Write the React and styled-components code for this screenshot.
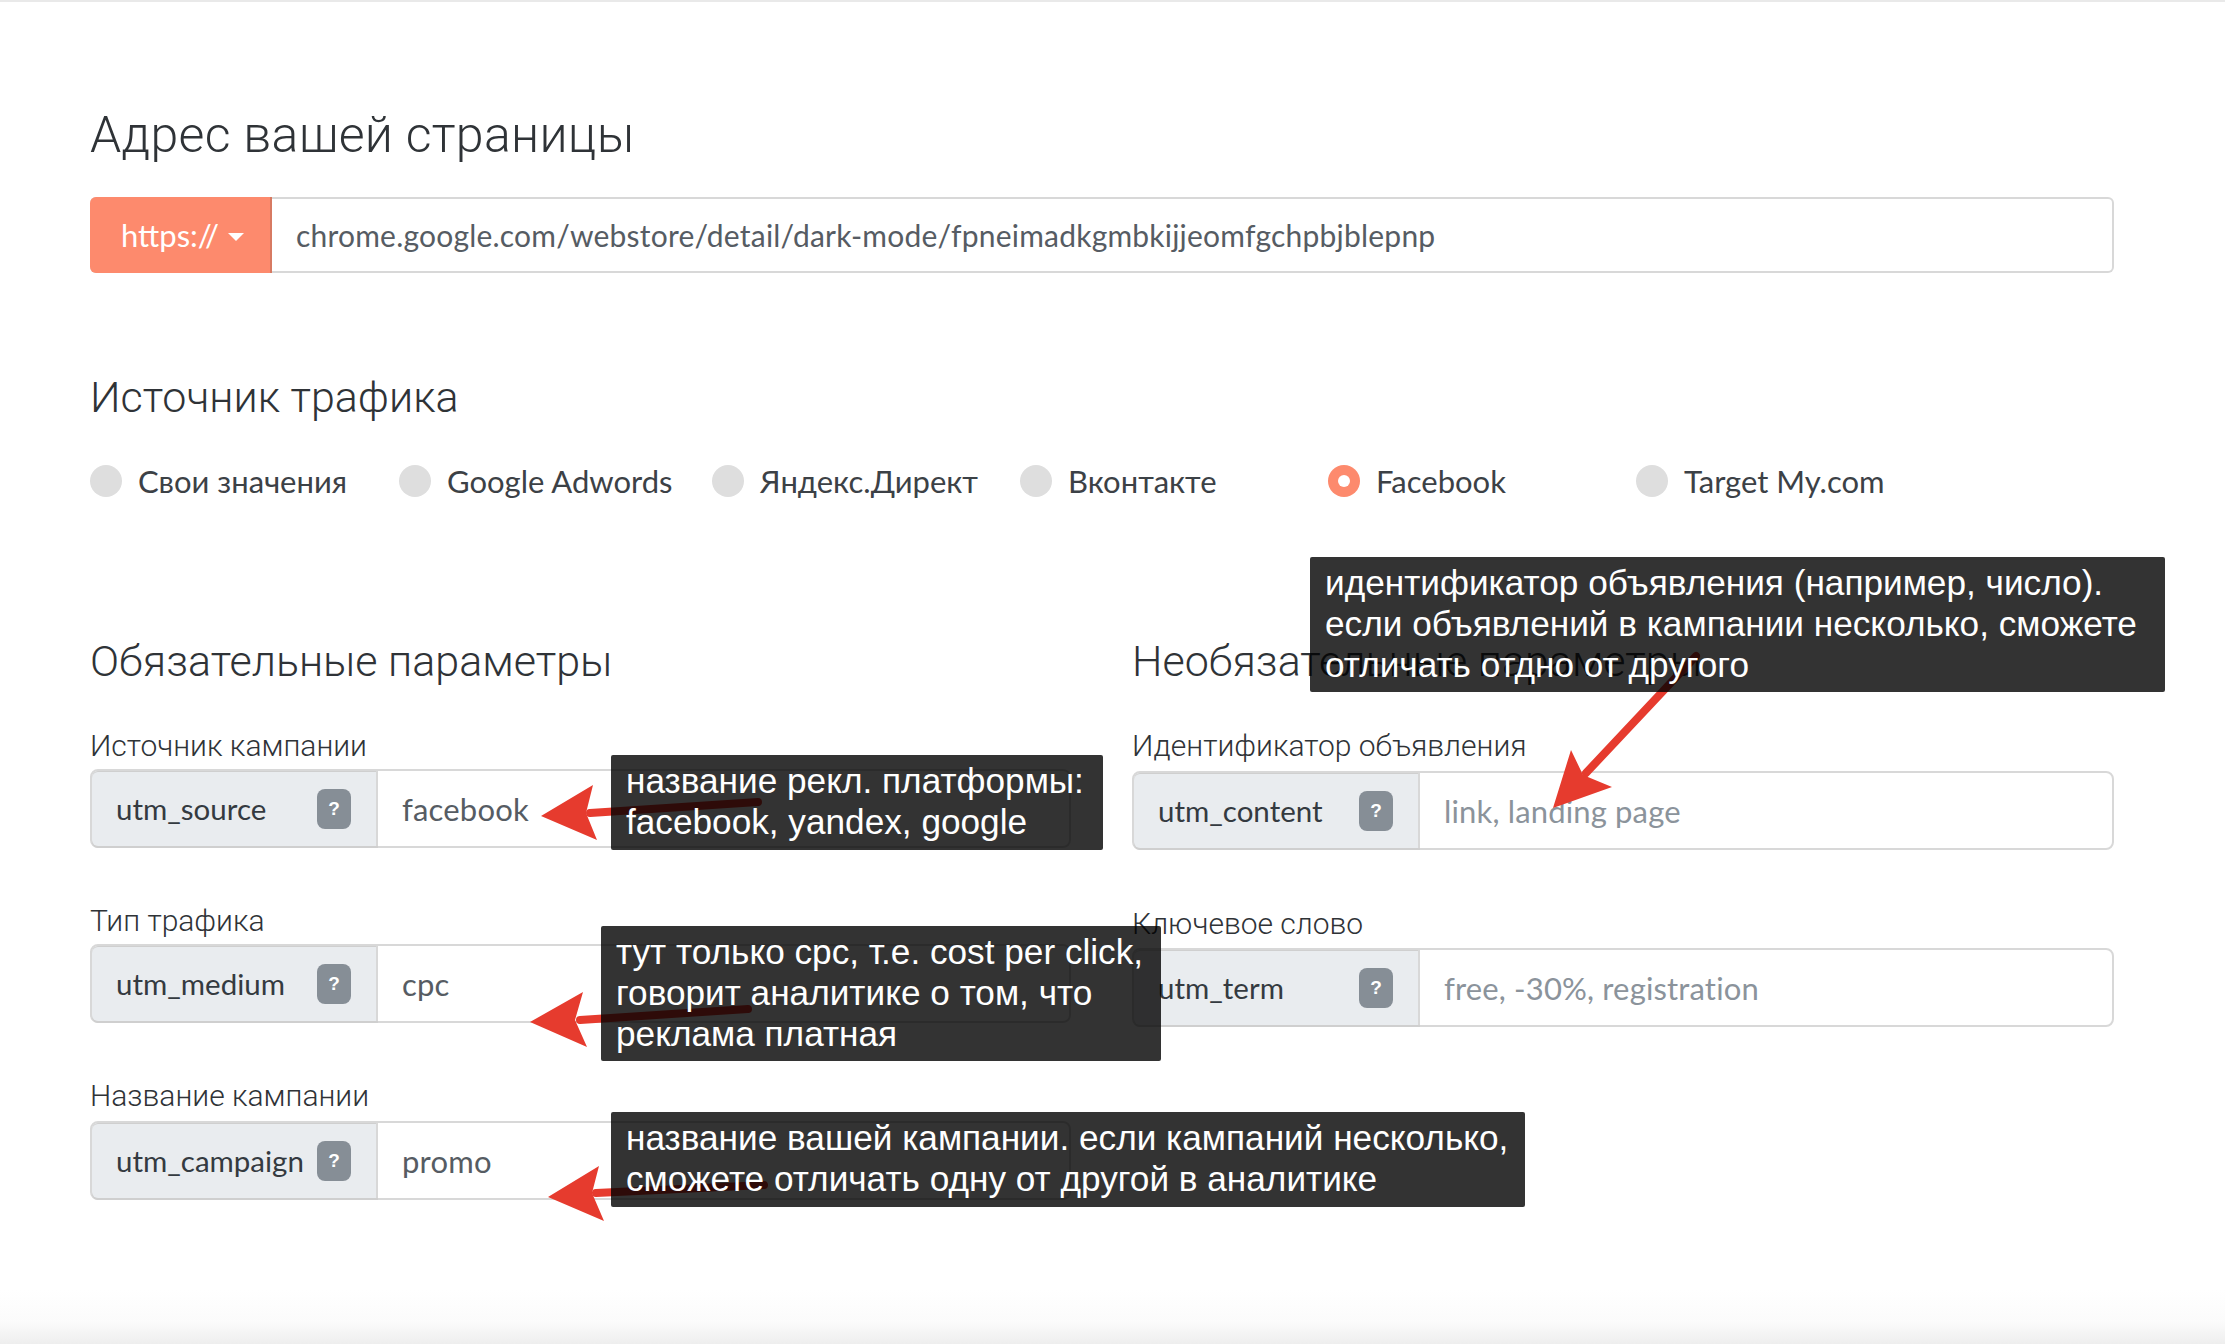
import React from "react";
import styled, { createGlobalStyle } from "styled-components";

const Global = createGlobalStyle`
  html, body { margin: 0; padding: 0; background: #fff; }
  * { box-sizing: border-box; }
`;

const FONT = `Lato, Roboto, "Open Sans", sans-serif`;

const Page = styled.div`
  position: relative;
  width: 2225px;
  height: 1344px;
  overflow: hidden;
  padding: 105px 111px 0 90px;
  font-family: ${FONT};
  color: #343a40;
  background: linear-gradient(to bottom, #e9e9e9 0, #e9e9e9 2px, #fff 2px, #fff 1290px, #fbfbfb 1322px, #eeeeee 1344px);
`;

const Heading = styled.h2`
  margin: ${(p) => p.$top}px 0 0;
  font-family: Roboto, sans-serif;
  font-weight: 300;
  font-size: ${(p) => p.$size}px;
  letter-spacing: ${(p) => p.$track}px;
  line-height: 60px;
  color: #2f3337;
`;

const UrlGroup = styled.div`
  display: flex;
  height: 76px;
  margin-top: 32px;
  border: 2px solid #d8d8d8;
  border-left: 0;
  border-radius: 6px;
`;

const Scheme = styled.div`
  display: flex;
  align-items: center;
  gap: 9px;
  width: 182px;
  margin: -2px 0;
  padding-left: 31px;
  background: #fd8a6d;
  border-right: 2px solid #d77a62;
  border-radius: 6px 0 0 6px;
  color: #fff;
  font-size: 31px;
  font-weight: 400;
`;

const Caret = styled.span`
  width: 0;
  height: 0;
  margin-top: 4px;
  border-left: 8px solid transparent;
  border-right: 8px solid transparent;
  border-top: 8px solid #fff;
`;

const UrlText = styled.div`
  display: flex;
  align-items: center;
  padding-left: 24px;
  font-size: 30px;
  font-weight: 400;
  letter-spacing: 0.21px;
  color: #565c63;
`;

const Radios = styled.div`
  display: flex;
  margin-top: 38px;
`;

const Radio = styled.div`
  display: flex;
  align-items: center;
  gap: 16px;
  width: ${(p) => p.$width}px;
  height: 32px;
  font-family: ${FONT};
  font-size: 31px;
  font-weight: 400;
  color: #3c4146;
`;

const Dot = styled.span`
  position: relative;
  flex: none;
  width: 32px;
  height: 32px;
  border-radius: 50%;
  background: ${(p) => (p.$on ? "#fd8a6d" : "#dedede")};
  &::after {
    content: "";
    display: ${(p) => (p.$on ? "block" : "none")};
    position: absolute;
    inset: 10px;
    border-radius: 50%;
    background: #fff;
  }
`;

const Columns = styled.div`
  display: grid;
  grid-template-columns: 981px 982px;
  column-gap: 61px;
  margin-top: 134px;
`;

const Column = styled.div`
  display: flex;
  flex-direction: column;
`;

const Field = styled.div`
  margin-top: ${(p) => p.$top}px;
`;

const Label = styled.div`
  height: 34px;
  line-height: 34px;
  margin-bottom: ${(p) => p.$gap}px;
  font-family: Roboto, sans-serif;
  font-size: 30px;
  font-weight: 300;
  color: #2f3337;
`;

const Group = styled.div`
  display: flex;
  height: 79px;
  border: 2px solid #d8d8d8;
  border-radius: 8px;
  font-size: 29.5px;
`;

const Addon = styled.div`
  display: flex;
  align-items: center;
  justify-content: space-between;
  flex: none;
  width: 286px;
  padding: 0 25px 0 24px;
  background: #e9ecef;
  border-right: 2px solid #d8d8d8;
  border-radius: 6px 0 0 6px;
  box-shadow: inset 0 1px 0 #cfcfcf, 0 2px 0 #cfcfcf;
  color: #343a40;
`;

const Help = styled.span`
  display: flex;
  align-items: center;
  justify-content: center;
  width: 34px;
  height: 40px;
  border-radius: 8px;
  background: #868e96;
  color: #fff;
  font-family: "Liberation Sans", sans-serif;
  font-size: 19px;
  font-weight: 700;
`;

const Value = styled.div`
  display: flex;
  align-items: center;
  padding-left: 24px;
  font-size: 31px;
  letter-spacing: ${(p) => (p.$muted ? 0.15 : 0.2)}px;
  color: ${(p) => (p.$muted ? "#8b939b" : "#565c63")};
`;

const Arrows = styled.svg`
  position: absolute;
  left: 0;
  top: 0;
  width: 2225px;
  height: 1344px;
`;

const Note = styled.div`
  position: absolute;
  left: ${(p) => p.$x}px;
  top: ${(p) => p.$y}px;
  width: ${(p) => p.$w}px;
  height: ${(p) => p.$h}px;
  padding: 5px 0 0 15px;
  background: rgba(0, 0, 0, 0.8);
  border-radius: 2px;
  color: #fff;
  font-family: "Liberation Sans", sans-serif;
  font-size: 35.2px;
  line-height: 41px;
  white-space: pre;
`;

const radios = [
  ["Свои значения", 309],
  ["Google Adwords", 313],
  ["Яндекс.Директ", 308],
  ["Вконтакте", 308],
  ["Facebook", 308, true],
  ["Target My.com", 300],
];

const left = [
  { label: "Источник кампании", utm: "utm_source", value: "facebook", top: 38, gap: 6 },
  { label: "Тип трафика", utm: "utm_medium", value: "cpc", top: 56, gap: 6 },
  { label: "Название кампании", utm: "utm_campaign", value: "promo", top: 56, gap: 8 },
];

const right = [
  { label: "Идентификатор объявления", utm: "utm_content", value: "link, landing page", top: 38, gap: 8, muted: true },
  { label: "Ключевое слово", utm: "utm_term", value: "free, -30%, registration", top: 57, gap: 7, muted: true },
];

const arrows = [
  { tail: "M590 813 L758 802", head: "541,816 593,785 586,813 597,840" },
  { tail: "M580 1020 L748 1009", head: "530,1022 583,992 575,1020 587,1047" },
  { tail: "M596 1193 L764 1185", head: "548,1197 599,1166 592,1193 604,1221" },
  { tail: "M1586 773 L1696 656", head: "1553,808 1571,750 1583,775 1612,787" },
];

const notes = [
  { x: 611, y: 755, w: 492, h: 95, text: "название рекл. платформы:\nfacebook, yandex, google" },
  { x: 601, y: 926, w: 560, h: 135, text: "тут только cpc, т.е. cost per click,\nговорит аналитике о том, что\nреклама платная" },
  { x: 611, y: 1112, w: 914, h: 95, text: "название вашей кампании. если кампаний несколько,\nсможете отличать одну от другой в аналитике" },
  { x: 1310, y: 557, w: 855, h: 135, text: "идентификатор объявления (например, число).\nесли объявлений в кампании несколько, сможете\nотличать отдно от другого" },
];

const FieldRow = ({ f }) => (
  <Field $top={f.top}>
    <Label $gap={f.gap}>{f.label}</Label>
    <Group>
      <Addon>
        {f.utm}
        <Help>?</Help>
      </Addon>
      <Value $muted={f.muted}>{f.value}</Value>
    </Group>
  </Field>
);

export default function App() {
  return (
    <Page>
      <Global />
      <Heading $top={0} $size={50} $track={0.3}>Адрес вашей страницы</Heading>
      <UrlGroup>
        <Scheme>
          https://
          <Caret />
        </Scheme>
        <UrlText>chrome.google.com/webstore/detail/dark-mode/fpneimadkgmbkijjeomfgchpbjblepnp</UrlText>
      </UrlGroup>
      <Heading $top={94} $size={43} $track={0}>Источник трафика</Heading>
      <Radios>
        {radios.map(([name, width, on]) => (
          <Radio key={name} $width={width}>
            <Dot $on={on} />
            {name}
          </Radio>
        ))}
      </Radios>
      <Columns>
        <Column>
          <Heading $top={0} $size={43} $track={0}>Обязательные параметры</Heading>
          {left.map((f) => <FieldRow key={f.utm} f={f} />)}
        </Column>
        <Column>
          <Heading $top={0} $size={43} $track={0}>Необязательные параметры</Heading>
          {right.map((f) => <FieldRow key={f.utm} f={f} />)}
        </Column>
      </Columns>
      <Arrows viewBox="0 0 2225 1344">
        {arrows.map((a) => (
          <g key={a.head}>
            <path d={a.tail} stroke="#e63b2e" strokeWidth="8" strokeLinecap="round" fill="none" />
            <polygon points={a.head} fill="#e63b2e" />
          </g>
        ))}
      </Arrows>
      {notes.map((n) => (
        <Note key={n.x + "-" + n.y} $x={n.x} $y={n.y} $w={n.w} $h={n.h}>{n.text}</Note>
      ))}
    </Page>
  );
}
